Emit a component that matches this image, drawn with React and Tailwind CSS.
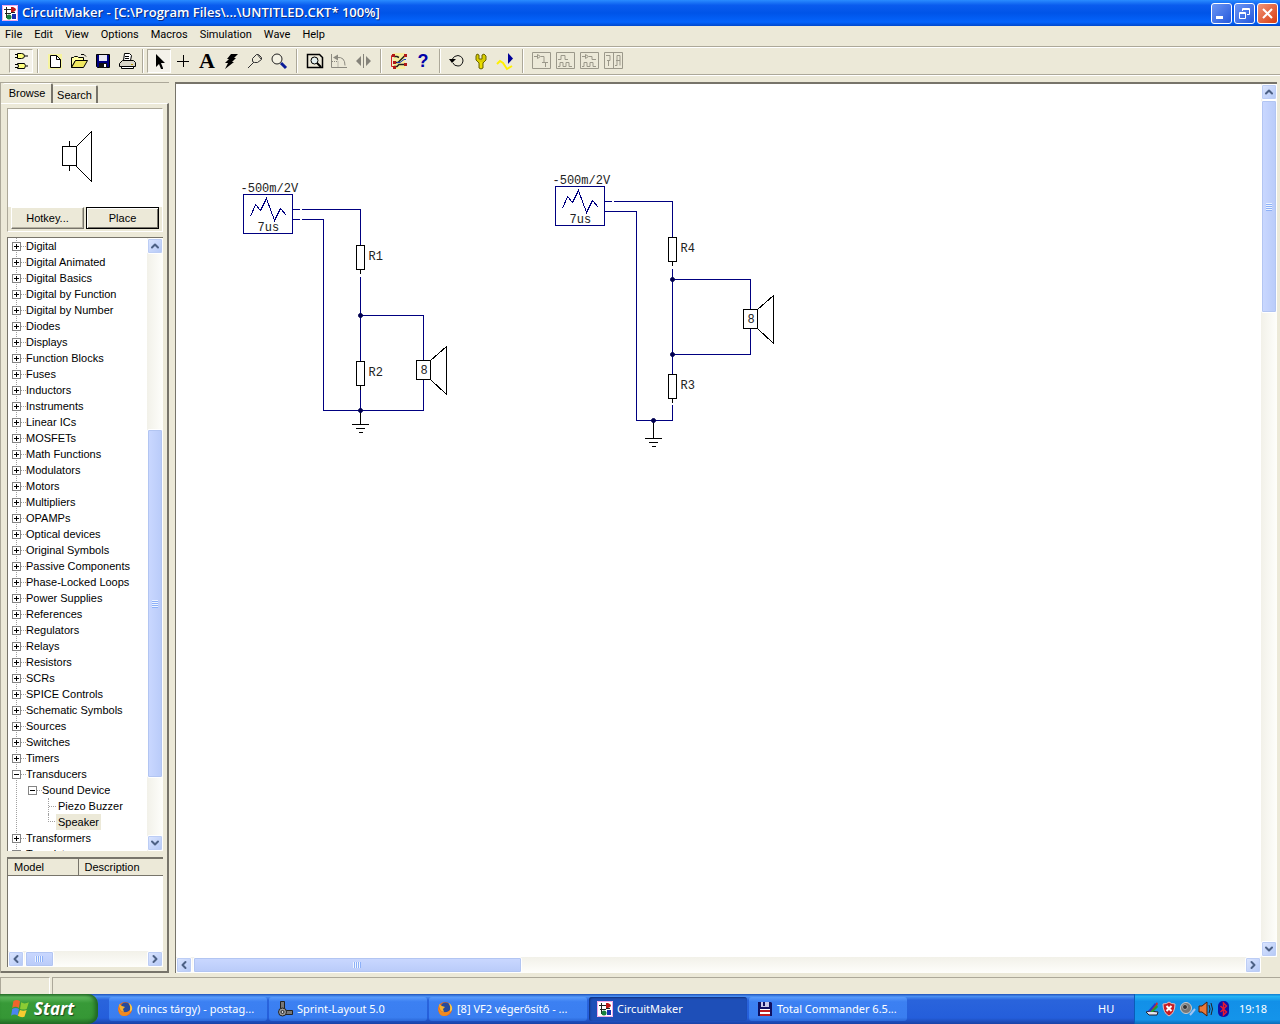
import React, { useState } from "react";
import { ChevronUp, ChevronDown, ChevronLeft, ChevronRight } from "lucide-react";

const MENUS = [
  "File",
  "Edit",
  "View",
  "Options",
  "Macros",
  "Simulation",
  "Wave",
  "Help",
];

const CATEGORIES = [
  "Digital",
  "Digital Animated",
  "Digital Basics",
  "Digital by Function",
  "Digital by Number",
  "Diodes",
  "Displays",
  "Function Blocks",
  "Fuses",
  "Inductors",
  "Instruments",
  "Linear ICs",
  "MOSFETs",
  "Math Functions",
  "Modulators",
  "Motors",
  "Multipliers",
  "OPAMPs",
  "Optical devices",
  "Original Symbols",
  "Passive Components",
  "Phase-Locked Loops",
  "Power Supplies",
  "References",
  "Regulators",
  "Relays",
  "Resistors",
  "SCRs",
  "SPICE Controls",
  "Schematic Symbols",
  "Sources",
  "Switches",
  "Timers",
];

/* ---------- toolbar icons, all on a 24x24 grid ---------- */

const ICONS = {
  parts: (
    <g fill="#ffff80" stroke="#000">
      <path d="M8.5 4.5h4q3 0 3 2.5t-3 2.5h-4z" />
      <path d="M8.5 14.5h7q2 2 0 5h-7q2-2.500 0-5z" />
      <path d="M6 5.500h2M6 8.500h2M16 7h3M6 15.500h3M6 18.500h3M17 17h2" />
    </g>
  ),
  create: (
    <g stroke="#000">
      <path d="M5 5h14v15H5z" fill="#ffff66" fillOpacity="0.5" stroke="none" />
      <path d="M7.500 6.500h6l4 4v8h-10z" fill="#fff" />
      <path d="M13.500 6.500v4h4" fill="none" />
    </g>
  ),
  open: (
    <g stroke="#000">
      <path d="M4.500 18.500v-10h2l1-1h3l1 1h5v3h-8z" fill="#ffffa0" />
      <path d="M4.500 18.500l4-7h12l-4 7z" fill="#f0e860" />
      <path d="M14 5.500h3l2 2" fill="none" />
    </g>
  ),
  save: (
    <g>
      <path d="M5.500 5.500h13v13h-12l-1-1z" fill="#000080" stroke="#000" />
      <path d="M8 6h8v6H8z" fill="#e8e8f4" />
      <path d="M8 14h8v5H8z" fill="#111" />
      <path d="M13 15h2v3h-2z" fill="#fff" />
    </g>
  ),
  print: (
    <g fill="#fff" stroke="#000">
      <path d="M8.500 11.500l1-7h5l2 2-1 5z" />
      <path d="M4.500 14.500l3-3h11l2 2v4h-16z" fill="#d8d5c8" />
      <path d="M6.500 17.500h12v2h-12zM10 7.500h4M10 9.500h4" />
      <path d="M16 15.500h2" stroke="#c0a000" />
    </g>
  ),
  arrow: <path d="M9 5v13l3-3 2 5h2v-1l-2-5h4z" fill="#000" />,
  wire: <path d="M6 12.500h12M12.500 6v12" stroke="#000" />,
  erase: <path d="M12 5h7l-4 4h2l-4 4h2l-9 7 3-6H6l4-4H8z" fill="#000" />,
  probe: (
    <g fill="none" stroke="#333">
      <path d="M9.500 12.500v-3l4-4h2l3 3v2l-4 3h-3z" />
      <path d="M11 13l-6 6M14 5l4 5" />
    </g>
  ),
  zoom: (
    <g fill="none">
      <circle cx="10" cy="10" r="5" stroke="#222" fill="#f4f2e4" />
      <path d="M14 14l5 5" stroke="#0a1c98" strokeWidth="3" />
    </g>
  ),
  fit: (
    <g fill="none" stroke="#000">
      <path d="M4.500 5.500h12l3 3v10h-15z" strokeWidth="1.500" />
      <circle cx="11.500" cy="11.500" r="3.500" fill="#e4f0f0" />
      <path d="M14 14l4 4" strokeWidth="2" />
    </g>
  ),
  rotate: (
    <g fill="none" stroke="#8c8a80">
      <path d="M4.500 5v13.500H20M10 8.500q8-1 8 8" />
      <path d="M6 8.500l5-3v6z" fill="#8c8a80" stroke="none" />
      <path d="M5 12.500h6v6" strokeDasharray="1 1" />
    </g>
  ),
  mirror: (
    <g fill="#85837a">
      <path d="M10 7v10l-5-5zM15 7v10l5-5z" />
      <path d="M12 5h1v14h-1z" />
    </g>
  ),
  traces: (
    <g fill="none" stroke="#222">
      <path d="M6 4h12v16H6z" fill="#fff27a" fillOpacity="0.600" stroke="none" />
      <path d="M7 7.500h3l2 1M8 13.500h3l7-7M7 17.500h3l2-2h6" strokeWidth="1.500" />
      <path d="M6 6.500H4.500v11H7" stroke="#d02020" />
      <path
        d="M5 5h3v3H5zM6 12h3v3H6zM6 17h3v3H6zM17 5h3v3h-3zM17 14h3v3h-3z"
        fill="#b01818"
        stroke="none"
      />
      <path d="M10 13.500h3l4-3h2" stroke="#1838c0" />
    </g>
  ),
  reset: (
    <g fill="none" stroke="#111">
      <path d="M7 10.500q2-4 6-4 5 1 5 5.500-1 5-5 5-4 0-5-3" />
      <path d="M4 10h7l-4 4z" fill="#000" stroke="none" />
    </g>
  ),
  tools: (
    <g>
      <path
        d="M8 5l2 1v4h3V6l2-1 2 2v4l-3 3v5l-2 1-2-1v-5l-3-3V7z"
        fill="#d8cc00"
        stroke="#6a6400"
      />
      <path d="M12 13v6" stroke="#fff200" />
    </g>
  ),
  scope: (
    <g fill="none">
      <path d="M4 15l3-3 3 2 4 6 5-3" stroke="#fff000" strokeWidth="2" />
      <path d="M15 4v11l5-5.500z" fill="#000098" />
    </g>
  ),
  digital1: (
    <g fill="none" stroke="#9b988a">
      <path d="M3.500 3.500h18v16h-18z" />
      <path d="M5 7.500h3M8.500 5.500v4l3-2zM12 7.500h3v6M13 13.500h6M16.500 14v4" />
    </g>
  ),
  digital2: (
    <g fill="none" stroke="#9b988a">
      <path d="M3.500 3.500h18v16h-18z" />
      <path d="M5 10.500h3v-4h4v4h3M5 17.500h2v-4h3v4h3v-4h3v4h3" />
    </g>
  ),
  digital3: (
    <g fill="none" stroke="#9b988a">
      <path d="M3.500 3.500h18v16h-18z" />
      <path d="M5 7.500h3M8.500 5.500v4l3-2zM12 7.500h3v3h4M5 17.500h2v-4h3v4h3v-4h3v4h3" />
    </g>
  ),
  digital4: (
    <g fill="none" stroke="#9b988a">
      <path d="M3.500 3.500h18v16h-18zM12.500 4v15" />
      <path d="M5 6.500h4v5H6M7.500 12v5M14 16.500h2v-10h3v10M15 11.500h4" />
    </g>
  ),
};

const TOOL_GROUPS = [
  { gap: "w-2.5", tools: [["parts", "Browse parts"]] },
  {
    gap: "w-2",
    tools: [
      ["create", "New"],
      ["open", "Open"],
      ["save", "Save"],
      ["print", "Print"],
    ],
  },
  {
    gap: "w-3",
    tools: [
      ["arrow", "Arrow"],
      ["wire", "Wire"],
      ["text", "Text"],
      ["erase", "Delete"],
      ["probe", "Probe"],
      ["zoom", "Zoom"],
    ],
  },
  {
    gap: "w-3",
    tools: [
      ["fit", "Fit to window"],
      ["rotate", "Rotate"],
      ["mirror", "Mirror"],
    ],
  },
  {
    gap: "w-2.5",
    tools: [
      ["traces", "Simulation mode"],
      ["help", "Help"],
    ],
  },
  {
    gap: "w-3",
    tools: [
      ["reset", "Reset"],
      ["tools", "Setup"],
      ["scope", "Run"],
    ],
  },
  {
    gap: null,
    tools: [
      ["digital1", "Trace"],
      ["digital2", "Waveforms"],
      ["digital3", "Step"],
      ["digital4", "Timing"],
    ],
  },
];

const ToolButton = ({ name, label }) => {
  const pressed = name === "parts" || name === "arrow";
  return (
    <button
      aria-label={label}
      className={`flex h-6 w-6 shrink-0 items-center justify-center ${
        pressed
          ? "border border-t-[#aca899] border-l-[#aca899] border-r-white border-b-white bg-[#f4f2ea]"
          : ""
      }`}
    >
      {name === "text" && (
        <span className="font-['Liberation_Serif',serif] text-[22px] leading-6 font-bold text-black">
          A
        </span>
      )}
      {name === "help" && (
        <span className="font-['Liberation_Sans',sans-serif] text-[18px] leading-6 font-bold text-[#0000a8]">
          ?
        </span>
      )}
      {ICONS[name] && (
        <svg viewBox="0 0 24 24" className="h-6 w-6 shrink-0">
          {ICONS[name]}
        </svg>
      )}
    </button>
  );
};

const AppIcon = () => (
  <svg viewBox="0 0 16 16" className="h-4 w-4 shrink-0">
    <path d="M0 0h16v16H0z" fill="#fff" />
    <path d="M.5.500h15v15H.5z" fill="none" stroke="#f0a8e8" />
    <path d="M2 4.500h7M3 8.500h6M4.500 2v11M9 7.500h4" fill="none" stroke="#222" />
    <path d="M9 2h2q3 1 3 2.500T11 7H9z" fill="#c01818" />
    <path d="M10 9h4v5h-4z" fill="#1830b0" />
    <circle cx="7" cy="12" r="2.500" fill="#18803c" />
  </svg>
);

/* ---------- scrollbars ---------- */

const arrowButton =
  "flex h-4 w-4 shrink-0 items-center justify-center rounded-[2px] border border-white bg-[linear-gradient(135deg,#dce6ff,#b4c8f6)] text-[#4d6185] shadow-[inset_0_0_0_1px_#bccdf5]";

const ScrollBar = ({ vertical, before, thumb, after }) => {
  const Start = vertical ? ChevronUp : ChevronLeft;
  const End = vertical ? ChevronDown : ChevronRight;
  return (
    <div
      className={`flex shrink-0 ${
        vertical
          ? "w-4 flex-col bg-[linear-gradient(90deg,#f2f1e9,#fefefb)]"
          : "h-4 bg-[linear-gradient(180deg,#f2f1e9,#fefefb)]"
      }`}
    >
      <button aria-label="Scroll back" className={arrowButton}>
        <Start size={12} strokeWidth={4} />
      </button>
      <div className="basis-0" style={{ flexGrow: before }} />
      <div
        className={`flex basis-0 items-center justify-center rounded-[2px] border border-white shadow-[inset_0_0_0_1px_#b2c5f2] ${
          vertical
            ? "bg-[linear-gradient(90deg,#cad8ff,#b9cbf9)]"
            : "bg-[linear-gradient(180deg,#cad8ff,#b9cbf9)]"
        }`}
        style={{ flexGrow: thumb }}
      >
        <div
          className={
            vertical
              ? "h-2 w-1.5 bg-[repeating-linear-gradient(180deg,#eef4fe_0_1px,#8cb0f8_1px_2px)]"
              : "h-1.5 w-2 bg-[repeating-linear-gradient(90deg,#eef4fe_0_1px,#8cb0f8_1px_2px)]"
          }
        />
      </div>
      <div className="basis-0" style={{ flexGrow: after }} />
      <button aria-label="Scroll forward" className={arrowButton}>
        <End size={12} strokeWidth={4} />
      </button>
    </div>
  );
};

/* ---------- parts browser ---------- */

const Expander = ({ open }) => (
  <svg viewBox="0 0 9 9" className="h-[9px] w-[9px] shrink-0" shapeRendering="crispEdges">
    <rect x="0.5" y="0.5" width="8" height="8" fill="#fff" stroke="#848484" />
    <path d={open ? "M2 4.500h5" : "M2 4.500h5M4.500 2v5"} stroke="#000" />
  </svg>
);

const TreeRow = ({ label, open, onToggle }) => (
  <button onClick={onToggle} className="flex h-4 items-center whitespace-nowrap">
    <Expander open={open} />
    <span className="w-[5px] border-t border-dotted border-[#a0a0a0]" />
    <span>{label}</span>
  </button>
);

const PartsTree = () => {
  const [opened, setOpened] = useState("Transducers");
  const toggle = (name) => setOpened(opened === name ? null : name);

  return (
    <div className="mt-[5px] mb-1.5 flex min-h-0 flex-1 border-t border-l border-[#77746a] bg-white">
      <div className="h-full min-w-0 flex-1 overflow-hidden">
        <ul className="ml-1 bg-[linear-gradient(180deg,#a0a0a0_50%,transparent_50%)] bg-[length:1px_2px] bg-[position:4px_0] bg-repeat-y">
          {CATEGORIES.map((name) => (
            <li key={name} className="h-4">
              <TreeRow
                label={name}
                open={opened === name}
                onToggle={() => toggle(name)}
              />
            </li>
          ))}
          <li>
            <TreeRow
              label="Transducers"
              open={opened === "Transducers"}
              onToggle={() => toggle("Transducers")}
            />
            {opened === "Transducers" && (
              <ul className="ml-4">
                <li>
                  <TreeRow label="Sound Device" open />
                  <ul className="ml-5">
                    <li className="flex h-4 items-center border-l border-dotted border-[#a0a0a0]">
                      <span className="w-[7px] border-t border-dotted border-[#a0a0a0]" />
                      <button className="ml-0.5">Piezo Buzzer</button>
                    </li>
                    <li className="flex h-4 items-center">
                      <span className="h-2 w-[7px] self-start border-b border-l border-dotted border-[#a0a0a0]" />
                      <button className="ml-px h-4 bg-[#ece9d8] px-0.5">Speaker</button>
                    </li>
                  </ul>
                </li>
              </ul>
            )}
          </li>
          <li>
            <TreeRow label="Transformers" />
          </li>
          <li>
            <TreeRow label="Transistors" />
          </li>
        </ul>
      </div>
      <ScrollBar vertical before={175} thumb={347} after={57} />
    </div>
  );
};

const raised =
  "border border-t-white border-l-white border-r-[#77746a] border-b-[#77746a] shadow-[inset_-1px_-1px_0_#b5b1a2]";

const Sidebar = () => (
  <aside className="flex w-[169px] shrink-0 flex-col border-t border-l border-[#aca899] font-['Liberation_Sans',sans-serif] text-[11px] leading-4 text-black">
    <div className="flex h-5 items-end pl-0.5">
      <button className="h-5 w-[50px] rounded-t-[2px] border-t border-r-2 border-t-white border-r-[#77746a] pb-0.5">
        Browse
      </button>
      <button className="h-[18px] w-[45px] rounded-t-[2px] border-t border-r-2 border-t-white border-r-[#77746a]">
        Search
      </button>
    </div>
    <div className="flex min-h-0 flex-1 flex-col border-t border-r-2 border-b-2 border-t-white border-r-[#77746a] border-b-[#77746a] py-1 pr-1 pl-1.5">
      <div className="border border-[#aca899] border-b-white border-r-white">
        <div className="flex h-[98px] items-center justify-center bg-white pb-0.5">
          <svg
            viewBox="0 0 48 52"
            className="h-[52px] w-12"
            fill="none"
            stroke="#000"
            shapeRendering="crispEdges"
          >
            <path d="M1.500 15.500h14v19h-14zM8.500 10v5M8.500 35v5M15.500 15.500l15-15v50l-15-15" />
          </svg>
        </div>
        <div className="flex h-6 gap-0.5 px-[3px] pb-0.5">
          <button className={`flex-1 ${raised}`}>Hotkey...</button>
          <button className="flex-1 border border-black shadow-[inset_1px_1px_0_#fff,inset_-1px_-1px_0_#77746a]">
            Place
          </button>
        </div>
      </div>
      <PartsTree />
      <div className="flex h-[110px] flex-col border-t-2 border-l border-t-[#77746a] border-l-[#77746a] bg-white">
        <table className="w-full table-fixed border-collapse text-left">
          <thead>
            <tr className="h-4 bg-[#ece9d8]">
              <th className="w-[70px] border-r border-b border-[#77746a] p-0 pl-1.5 font-normal">
                Model
              </th>
              <th className="border-b border-[#77746a] p-0 pl-1.5 font-normal">
                Description
              </th>
            </tr>
          </thead>
        </table>
        <div className="flex-1" />
        <ScrollBar before={1} thumb={27} after={94} />
      </div>
    </div>
  </aside>
);

/* ---------- schematic symbols ---------- */

const NAVY = "#000080";

const Label = ({ x, y, children }) => (
  <text
    x={x}
    y={y}
    className="fill-[#222] font-['Liberation_Mono',monospace] text-[12px]"
  >
    {children}
  </text>
);

const Source = ({ x, y }) => (
  <g transform={`translate(${x} ${y})`}>
    <rect width="49" height="39" stroke={NAVY} />
    <path d="M7 22L12 10L17 16L23 4L31 26L37 14L43 21" stroke={NAVY} />
    <g stroke="none">
      <Label x={-3} y={-3}>
        -500m/2V
      </Label>
      <Label x={14} y={36}>
        7us
      </Label>
    </g>
  </g>
);

const Resistor = ({ x, y, name }) => (
  <g transform={`translate(${x} ${y})`}>
    <rect x="-4" width="8" height="24" fill="#fff" stroke="#000" />
    <path d="M0 24v4" stroke="#000" />
    <g stroke="none">
      <Label x={8} y={14}>
        {name}
      </Label>
    </g>
  </g>
);

const Speaker = ({ x, y }) => (
  <g transform={`translate(${x} ${y})`}>
    <rect width="14" height="19" fill="#fff" stroke="#000" />
    <path d="M14 0L30 -14V34L14 19" stroke="#000" />
    <g stroke="none">
      <Label x={4} y={13}>
        8
      </Label>
    </g>
  </g>
);

const Ground = ({ x, y, drop }) => (
  <g transform={`translate(${x} ${y})`} stroke="#000">
    <path d={`M0 0V${drop}M-9 ${drop}H8M-5 ${drop + 4}H4M-2 ${drop + 8}H2`} />
  </g>
);

const Node = ({ x, y }) => (
  <circle
    cx={x}
    cy={y}
    r="2"
    fill="#000050"
    stroke="#000050"
    shapeRendering="auto"
  />
);

const Schematic = () => (
  <svg
    viewBox="176 84 640 400"
    className="h-[400px] w-[640px]"
    fill="none"
    shapeRendering="crispEdges"
  >
    <g transform="translate(0.5 0.5)">
      <g stroke={NAVY}>
        <path d="M292 209H299M301 209H360V245M292 219H299M301 219H323V410H423V379" />
        <path d="M360 276V361M360 315H423V360M360 385V410" />
        <path d="M604 201H611M613 201H672V237M604 211H636V420H672V404" />
        <path d="M672 268V374M672 279H750V309M750 328V354H672" />
      </g>
      <Source x={243} y={194} />
      <Resistor x={360} y={245} name="R1" />
      <Resistor x={360} y={361} name="R2" />
      <Speaker x={416} y={360} />
      <Ground x={360} y={410} drop={14} />
      <Node x={360} y={315} />
      <Node x={360} y={410} />

      <Source x={555} y={186} />
      <Resistor x={672} y={237} name="R4" />
      <Resistor x={672} y={374} name="R3" />
      <Speaker x={743} y={309} />
      <Ground x={653} y={420} drop={18} />
      <Node x={672} y={279} />
      <Node x={672} y={354} />
      <Node x={653} y={420} />
    </g>
  </svg>
);

/* ---------- taskbar ---------- */

const Firefox = () => (
  <svg viewBox="0 0 16 16" className="h-4 w-4 shrink-0">
    <circle cx="8" cy="8" r="7" fill="#e8681c" />
    <circle cx="8.500" cy="6.500" r="5" fill="#284a9c" />
    <path d="M1 5q1 5 5 6 5 1 8-3-1 7-7 7T1 5z" fill="#f08a20" />
    <path d="M2 3l3 2 3 1-2 2 1 3Q2 10 2 3z" fill="#f4b030" />
    <path d="M12 2q4 3 3 7l-2 2q1-5-1-9z" fill="#f8c848" />
  </svg>
);

const SprintIcon = () => (
  <svg viewBox="0 0 16 16" className="h-4 w-4 shrink-0">
    <path d="M3.500.500h4v8h-4zM8 9.500h7.500v4H8z" fill="#777" stroke="#222" />
    <circle cx="5.500" cy="11" r="4" fill="#999" stroke="#222" />
    <circle cx="5.500" cy="11" r="1.500" fill="#ddd" stroke="#222" />
  </svg>
);

const FloppyIcon = () => (
  <svg viewBox="0 0 16 16" className="h-4 w-4 shrink-0">
    <path d="M1 1h13l1 1v13H1z" fill="#101060" />
    <path d="M4 1h8v5H4z" fill="#c8c8e8" />
    <path d="M6 1h2v4H6z" fill="#101060" />
    <path d="M3 8h10v7H3z" fill="#fff" />
    <path d="M3 9h10v2H3zM3 13h10v2H3z" fill="#c01c20" />
  </svg>
);

const TASKS = [
  { title: "(nincs tárgy) - postag...", Icon: Firefox },
  { title: "Sprint-Layout 5.0", Icon: SprintIcon },
  { title: "[8] VF2 végerősítő - ...", Icon: Firefox },
  { title: "CircuitMaker", Icon: AppIcon, active: true },
  { title: "Total Commander 6.5...", Icon: FloppyIcon },
];

const TrayIcons = () => (
  <svg viewBox="0 0 86 16" className="h-4 w-[86px]">
    {/* pen */}
    <path d="M1 11l4-1 8 1-1 3H4z" fill="#e4e4ec" stroke="#223" />
    <path d="M4 11L12 1l1 2-6 8z" fill="#d02828" />
    <path d="M5 11l7-7 1 2-5 5z" fill="#20a030" />
    <path d="M3 10L10 2l1 1-6 8z" fill="#2038d0" />
    {/* shield */}
    <path d="M18 3q4 0 6-2 2 2 6 2 0 9-6 12-6-3-6-12z" fill="#c81c24" stroke="#e8c0c0" />
    <path d="M21.500 5l5 5M26.500 5l-5 5" stroke="#fff" strokeWidth="2" />
    {/* volume */}
    <circle cx="41" cy="7" r="5.500" fill="#777" stroke="#ccc" />
    <circle cx="40" cy="6" r="2.500" fill="#333" stroke="#aaa" />
    <path d="M45 14l5-6" stroke="#9fc4f4" strokeWidth="2" />
    {/* sound manager */}
    <path d="M54 5h3l5-4v14l-5-4h-3z" fill="#e87838" stroke="#4a1c08" />
    <path d="M64 4q2 4 0 8M66 2q3 6 0 12" fill="none" stroke="#222" />
    {/* bluetooth */}
    <rect x="73" y="0" width="11" height="16" rx="5" fill="#1010a8" />
    <path d="M75.500 5l6 6-3 3V2l3 3-6 6" fill="none" stroke="#e81830" strokeWidth="1.500" />
  </svg>
);

const Taskbar = () => (
  <footer className="flex h-[30px] shrink-0 items-stretch bg-[linear-gradient(180deg,#1f52b8_0,#4a8ff2_8%,#2a64dc_20%,#245edb_80%,#1941a5_100%)] font-['Noto_Sans',sans-serif] text-[11px] text-white">
    <button className="flex w-[98px] items-center gap-1 rounded-r-[10px] bg-[linear-gradient(180deg,#2d7a2f_0,#5eb85c_10%,#389a38_30%,#359735_80%,#25702a_100%)] pl-2.5 shadow-[inset_-3px_0_4px_#1f6422]">
      <svg viewBox="0 0 18 18" className="h-5 w-5 shrink-0">
        <path d="M3 2q3-2 6 0L8 8Q5 6 2 8z" fill="#f0642c" />
        <path d="M10 3q3 2 7 0l-2 6q-3 1-6 0z" fill="#8ccc34" />
        <path d="M2 9q3-2 6 0l-1 6q-3-2-6 0z" fill="#4c84f0" />
        <path d="M9 10q3 1 6 0l-2 6q-3 1-6-1z" fill="#f8cc30" />
      </svg>
      <span className="font-['Open_Sans',sans-serif] text-[17px] leading-6 font-bold italic [text-shadow:1px_1px_1px_#1c4a1e]">
        Start
      </span>
    </button>
    <nav className="ml-[11px] flex min-w-0 flex-1 items-center gap-0.5">
      {TASKS.map(({ title, Icon, active }) => (
        <button
          key={title}
          className={`flex h-6 w-[158px] min-w-0 items-center gap-1 rounded-[3px] pl-2 text-left whitespace-nowrap ${
            active
              ? "bg-[#1e4fb8] shadow-[inset_1px_1px_2px_#10307c]"
              : "bg-[linear-gradient(180deg,#5a9cfb_0,#3c80f2_20%,#3a7ef0_85%,#2a68d8_100%)]"
          }`}
        >
          <Icon />
          <span>{title}</span>
        </button>
      ))}
    </nav>
    <span className="flex w-9 items-center">HU</span>
    <div className="flex w-[146px] items-center gap-2 border-l border-[#0a5cb8] bg-[linear-gradient(180deg,#0f7cd0_0,#24b4f4_8%,#1290e8_25%,#1494ea_85%,#0c6cb8_100%)] pl-2.5">
      <TrayIcons />
      <time>19:18</time>
    </div>
  </footer>
);

const captionButton =
  "flex h-[21px] w-[21px] items-center justify-center rounded-[3px] border border-white";

export default function App() {
  return (
    <div className="flex h-screen flex-col overflow-hidden bg-[#ece9d8] font-['Roboto',sans-serif] text-[11px] text-black">
      <header className="flex h-[26px] shrink-0 items-center bg-[linear-gradient(180deg,#2a8cff_0,#0a5cee_20%,#0054e8_50%,#0464fc_85%,#0048cc_100%)] pr-0.5 pl-0.5 text-white">
        <AppIcon />
        <h1 className="ml-1 flex-1 font-['Open_Sans',sans-serif] text-[13px] font-semibold whitespace-nowrap [text-shadow:1px_1px_0_#0c2c80]">
          CircuitMaker - [C:\Program Files\...\UNTITLED.CKT* 100%]
        </h1>
        <div className="flex gap-0.5">
          <button
            aria-label="Minimize"
            className={`${captionButton} bg-[linear-gradient(135deg,#6c96f4,#2458dc)]`}
          >
            <svg viewBox="0 0 19 19" className="h-[19px] w-[19px]">
              <path d="M4 12h7v3H4z" fill="#fff" />
            </svg>
          </button>
          <button
            aria-label="Restore"
            className={`${captionButton} bg-[linear-gradient(135deg,#6c96f4,#2458dc)]`}
          >
            <svg viewBox="0 0 19 19" className="h-[19px] w-[19px]" fill="none" stroke="#fff">
              <path d="M4.500 8.500h6v6h-6zM4 9.500h7M7.500 7V4.500h7v6H12M7 5.500h8" />
            </svg>
          </button>
          <button
            aria-label="Close"
            className={`${captionButton} bg-[linear-gradient(135deg,#f09478,#d83c10)]`}
          >
            <svg viewBox="0 0 19 19" className="h-[19px] w-[19px]">
              <path d="M5 5l9 9M14 5l-9 9" stroke="#fff" strokeWidth="2" />
            </svg>
          </button>
        </div>
      </header>

      <nav className="flex h-5 shrink-0 items-center gap-3 pb-0.5 pl-[5px]">
        {MENUS.map((menu) => (
          <button key={menu}>{menu}</button>
        ))}
      </nav>

      <div className="flex h-[29px] shrink-0 items-center border-t border-b border-[#aca899] pl-[9px] shadow-[inset_0_1px_0_#fff,0_1px_0_#fff]">
        {TOOL_GROUPS.map(({ gap, tools }, idx) => (
          <React.Fragment key={idx}>
            {tools.map(([name, label]) => (
              <ToolButton key={name} name={name} label={label} />
            ))}
            {gap && (
              <div className={`flex h-6 shrink-0 justify-center ${gap}`}>
                <span className="w-0.5 border-r border-l border-r-white border-l-[#aca899]" />
              </div>
            )}
          </React.Fragment>
        ))}
      </div>

      <main className="mt-[7px] flex min-h-0 flex-1 gap-1.5 pr-[3px]">
        <Sidebar />
        <section className="flex min-w-0 flex-1 flex-col border-t-2 border-l border-[#77746a]">
          <div className="flex min-h-0 flex-1">
            <div className="min-w-0 flex-1 overflow-hidden bg-white">
              <Schematic />
            </div>
            <ScrollBar vertical before={0} thumb={211} after={628} />
          </div>
          <div className="flex">
            <div className="flex-1">
              <ScrollBar before={1} thumb={327} after={724} />
            </div>
            <div className="w-4" />
          </div>
        </section>
      </main>

      <div className="mt-1 flex h-[17px] shrink-0 gap-0.5">
        <div className="w-[50px] border-t border-l border-r border-[#aca899] border-r-white" />
        <div className="flex-1 border-t border-l border-[#aca899]" />
      </div>

      <Taskbar />
    </div>
  );
}
